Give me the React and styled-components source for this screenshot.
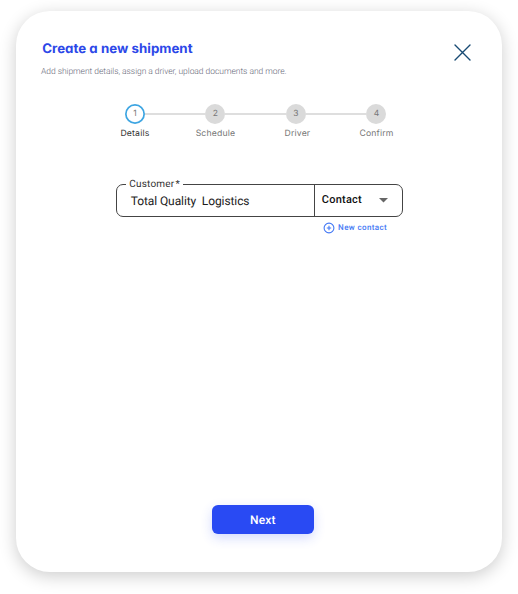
import React from 'react';
import styled, { createGlobalStyle } from 'styled-components';

const GlobalStyle = createGlobalStyle`
  * { box-sizing: border-box; }
  body {
    margin: 0;
    background: #fff;
    font-family: Roboto, sans-serif;
    text-rendering: geometricPrecision;
  }
`;

const Page = styled.div`
  height: 594px;
  padding: 11px 16.5px 22px 16px;
  overflow: hidden;
`;

const Card = styled.main`
  display: flex;
  flex-direction: column;
  height: 561px;
  background: #fff;
  border-radius: 34px;
  box-shadow: 0 4px 17px rgba(0, 0, 0, 0.2);
`;

const Header = styled.header`
  display: flex;
  justify-content: space-between;
  height: 93px;
  padding: 28px 30.5px 0 25px;
`;

const Title = styled.h1`
  margin: 0 0 0 1.2px;
  font: 700 13.3px/20px Inter, sans-serif;
  font-feature-settings: 'cv11', 'ss03';
  letter-spacing: 0.02px;
  color: #2c47e8;
  white-space: nowrap;
`;

const Subtitle = styled.p`
  margin: 6px 0 0;
  font: 300 8.5px/14px Roboto, sans-serif;
  letter-spacing: -0.045px;
  color: #666878;
  white-space: nowrap;
`;

const CloseButton = styled.button`
  width: 17px;
  height: 17px;
  margin-top: 5px;
  padding: 0;
  border: 0;
  background: none;
  svg { display: block; }
`;

const Stepper = styled.ol`
  display: grid;
  grid-template-columns: repeat(4, 80.5px);
  width: 322px;
  margin: 0 0 0 78.7px;
  padding: 0;
  list-style: none;
`;

const StepItem = styled.li`
  display: flex;
  flex-direction: column;
  align-items: center;
`;

const Track = styled.div`
  display: grid;
  grid-template-columns: 1fr 20px 1fr;
  align-items: center;
  width: 100%;
`;

const Rail = styled.span`
  height: 2px;
  background: ${(p) => (p.$hidden ? 'transparent' : '#dedede')};
`;

const Dot = styled.span`
  display: grid;
  place-items: center;
  height: 20px;
  padding-top: 1px;
  border-radius: 50%;
  background: ${(p) => (p.$active ? '#fff' : '#dadada')};
  box-shadow: ${(p) => (p.$active ? 'inset 0 0 0 1.7px #3da5e2' : 'none')};
  color: #777;
  font: 400 8.5px/19px Inter, sans-serif;
`;

const StepLabel = styled.span`
  margin: 5px 0 0 ${(p) => p.$shift || '0'};
  font: 400 8.7px/11px Inter, sans-serif;
  letter-spacing: 0.15px;
  color: ${(p) => (p.$active ? '#333' : '#777')};
`;

const Form = styled.section`
  width: 287px;
  margin: 44px 0 0 99.8px;
`;

const Field = styled.div`
  position: relative;
  display: grid;
  grid-template-columns: 197.5px 1fr;
  height: 33px;
  border: 1px solid #444;
  border-radius: 7px;
`;

const FieldLabel = styled.label`
  position: absolute;
  top: -7px;
  left: 9px;
  padding: 0 3px 0 3.5px;
  background: #fff;
  font: 400 10px/14px Roboto, sans-serif;
  letter-spacing: 0.2px;
  word-spacing: -1.5px;
  color: #333;
  white-space: nowrap;
`;

const CustomerValue = styled.div`
  padding: 1px 0 0 14px;
  font: 400 12px/30px Roboto, sans-serif;
  letter-spacing: -0.1px;
  color: #1c1c1c;
  white-space: pre;
`;

const ContactSelect = styled.div`
  display: flex;
  justify-content: space-between;
  align-items: center;
  padding: 0 14px 1px 6.5px;
  border-left: 1px solid #444;
  font: 500 11px/28px Roboto, sans-serif;
  letter-spacing: 0.22px;
  color: #111;
`;

const NewContact = styled.a`
  display: flex;
  align-items: center;
  gap: 3.5px;
  margin: 5px 0 0 206.8px;
  font: 500 8px/12px Roboto, sans-serif;
  letter-spacing: 0.38px;
  color: #4479f5;
  svg { flex: none; }
  span { margin-top: -1px; }
`;

const NextButton = styled.button`
  width: 102px;
  height: 29px;
  margin: auto 0 38px 195.8px;
  padding: 2px 0 0;
  border: 0;
  border-radius: 6px;
  background: #294af3;
  box-shadow: 0 4px 12px rgba(41, 74, 243, 0.2);
  font: 500 12px/27px Roboto, sans-serif;
  letter-spacing: 0.1px;
  text-rendering: geometricPrecision;
  color: #fff;
`;

const steps = [
  { name: 'Details' },
  { name: 'Schedule' },
  { name: 'Driver', shift: '3px' },
  { name: 'Confirm' },
];

export default function App() {
  return (
    <>
      <GlobalStyle />
      <Page>
        <Card>
          <Header>
            <div>
              <Title>Create a new shipment</Title>
              <Subtitle>Add shipment details, assign a driver, upload documents and more.</Subtitle>
            </div>
            <CloseButton aria-label="Close">
              <svg width="17" height="17" viewBox="0 0 17 17" fill="none" stroke="#174a73" strokeWidth="1.4" strokeLinecap="round">
                <path d="M1 1l15 15M16 1L1 16" />
              </svg>
            </CloseButton>
          </Header>
          <Stepper>
            {steps.map((step, i) => (
              <StepItem key={step.name}>
                <Track>
                  <Rail $hidden={i === 0} />
                  <Dot $active={i === 0}>{i + 1}</Dot>
                  <Rail $hidden={i === steps.length - 1} />
                </Track>
                <StepLabel $active={i === 0} $shift={step.shift}>{step.name}</StepLabel>
              </StepItem>
            ))}
          </Stepper>
          <Form>
            <Field>
              <FieldLabel>Customer *</FieldLabel>
              <CustomerValue>{'Total Quality  Logistics'}</CustomerValue>
              <ContactSelect>
                Contact
                <svg width="9" height="5" viewBox="0 0 9 5"><path d="M0 0h9L4.5 4.5z" fill="#666" /></svg>
              </ContactSelect>
            </Field>
            <NewContact>
              <svg width="12" height="12" viewBox="0 0 12 12" fill="none" stroke="#4479f5">
                <circle cx="6" cy="6" r="4.9" strokeWidth="1.1" />
                <path d="M6 3.8v4.4M3.8 6h4.4" strokeWidth="1.1" />
              </svg>
              <span>New contact</span>
            </NewContact>
          </Form>
          <NextButton>Next</NextButton>
        </Card>
      </Page>
    </>
  );
}
